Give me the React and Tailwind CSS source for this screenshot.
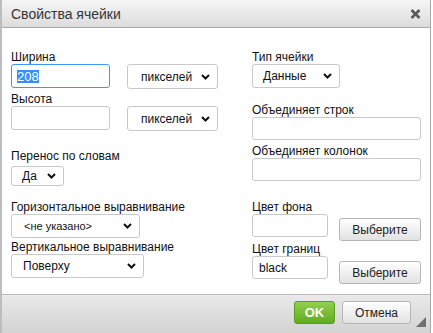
import React from "react";

function Chevron() {
  return (
    <svg width="9" height="6" viewBox="0 0 9 6" className="shrink-0">
      <path d="M1 1 L4.5 4.5 L8 1" fill="none" stroke="#111" strokeWidth="2" />
    </svg>
  );
}

function Select({ text, className, textClass = "" }) {
  return (
    <div
      className={`flex items-center justify-between rounded-[3px] border border-[#c9c9c9] bg-white pr-[7px] text-[12px] text-[#111] ${className}`}
    >
      <span className={textClass}>{text}</span>
      <Chevron />
    </div>
  );
}

function Label({ children, className = "" }) {
  return <div className={`text-[12px] leading-[14px] text-[#111] ${className}`}>{children}</div>;
}

function Input({ className = "", children }) {
  return (
    <div
      className={`flex items-center rounded-[3px] border border-[#c9c9c9] bg-white pl-[5px] text-[12px] text-[#111] ${className}`}
    >
      {children}
    </div>
  );
}

function PickButton({ className = "" }) {
  return (
    <div
      className={`flex h-[23px] w-[82px] items-center justify-center rounded-[3px] border border-[#b5b5b5] bg-gradient-to-b from-[#ffffff] to-[#e2e2e2] text-[12px] text-[#222] ${className}`}
    >
      Выберите
    </div>
  );
}

export default function App() {
  return (
    <div className="h-[333px] w-[433px] overflow-hidden bg-white font-['Liberation_Sans',Arial,sans-serif]">
      <div className="relative flex h-[333px] w-[431px] flex-col border-l-2 border-r border-l-[#bdbdbd] border-r-[#a8a8a8]">
        {/* Title bar */}
        <div className="flex h-[28px] shrink-0 items-center justify-between border-b border-[#a9a9a9] bg-gradient-to-b from-[#f6f6f6] to-[#dcdcdc] pl-[9px] pr-[9px]">
          <span className="text-[14px] leading-[18px] text-[#353535]">Свойства ячейки</span>
          <svg width="11" height="10" viewBox="0 0 11 10">
            <path d="M1.5 1 L9.5 9 M9.5 1 L1.5 9" stroke="#5a5a5a" strokeWidth="2.6" fill="none" />
          </svg>
        </div>

        {/* Body */}
        <div className="flex h-[266px] shrink-0 pl-[9px] pt-[22px]">
          {/* Left column */}
          <div className="flex w-[241px] flex-col">
            <Label>Ширина</Label>
            <div className="flex items-start gap-[17px]">
              <div className="flex h-[24px] w-[99px] items-center rounded-[3px] border border-[#3d97f5] bg-white pl-[5px] text-[13px]">
                <span className="bg-[#3390ff] leading-[13px] text-white">208</span>
              </div>
              <Select text="пикселей" className="h-[25px] w-[91px] pl-[13px]" />
            </div>
            <Label className="mt-[3px]">Высота</Label>
            <div className="flex items-start gap-[17px]">
              <Input className="h-[24px] w-[99px]" />
              <Select text="пикселей" className="h-[25px] w-[91px] pl-[13px]" />
            </div>
            <Label className="mt-[18px]">Перенос по словам</Label>
            <Select text="Да" className="mt-[3px] h-[20px] w-[53px] pl-[10px]" />
            <Label className="mt-[14px]">Горизонтальное выравнивание</Label>
            <Select text="<не указано>" className="h-[24px] w-[129px] pl-[12px]" textClass="text-[11px]" />
            <Label className="mt-[2px]">Вертикальное выравнивание</Label>
            <Select text="Поверху" className="h-[24px] w-[133px] pl-[11px]" />
          </div>

          {/* Right column */}
          <div className="flex w-[169px] flex-col">
            <Label>Тип ячейки</Label>
            <Select text="Данные" className="h-[24px] w-[88px] pl-[10px]" />
            <Label className="mt-[15px]">Объединяет строк</Label>
            <Input className="h-[23px] w-[169px]" />
            <Label className="mt-[4px]">Объединяет колонок</Label>
            <Input className="h-[23px] w-[169px]" />
            <Label className="mt-[19px]">Цвет фона</Label>
            <div className="flex items-start gap-[11px]">
              <Input className="h-[23px] w-[76px]" />
              <PickButton className="mt-[4px]" />
            </div>
            <Label className="mt-[1px]">Цвет границ</Label>
            <div className="flex items-start gap-[11px]">
              <Input className="h-[23px] w-[76px] pl-[6px]">black</Input>
              <PickButton className="mt-[5px]" />
            </div>
          </div>
        </div>

        {/* Footer */}
        <div className="flex flex-1 items-start justify-end gap-[7px] border-t border-[#bcbcbc] bg-gradient-to-b from-[#e9e9e9] to-[#d3d3d3] pr-[19px] pt-[6px]">
          <div className="flex h-[23px] w-[41px] items-center justify-center rounded-[3px] border border-[#5a9e1c] bg-gradient-to-b from-[#92d050] to-[#62ab1c] text-[13px] font-bold text-white">
            OK
          </div>
          <div className="flex h-[23px] w-[69px] items-center justify-center rounded-[3px] border border-[#b5b5b5] bg-gradient-to-b from-[#ffffff] to-[#e2e2e2] text-[12px] text-[#222]">
            Отмена
          </div>
        </div>

        {/* Resize grip */}
        <svg className="absolute left-[414px] top-[317px]" width="10" height="10" viewBox="0 0 10 10">
          <path d="M10 0 L10 10 L0 10 Z" fill="#6f6f6f" />
        </svg>
      </div>
    </div>
  );
}
